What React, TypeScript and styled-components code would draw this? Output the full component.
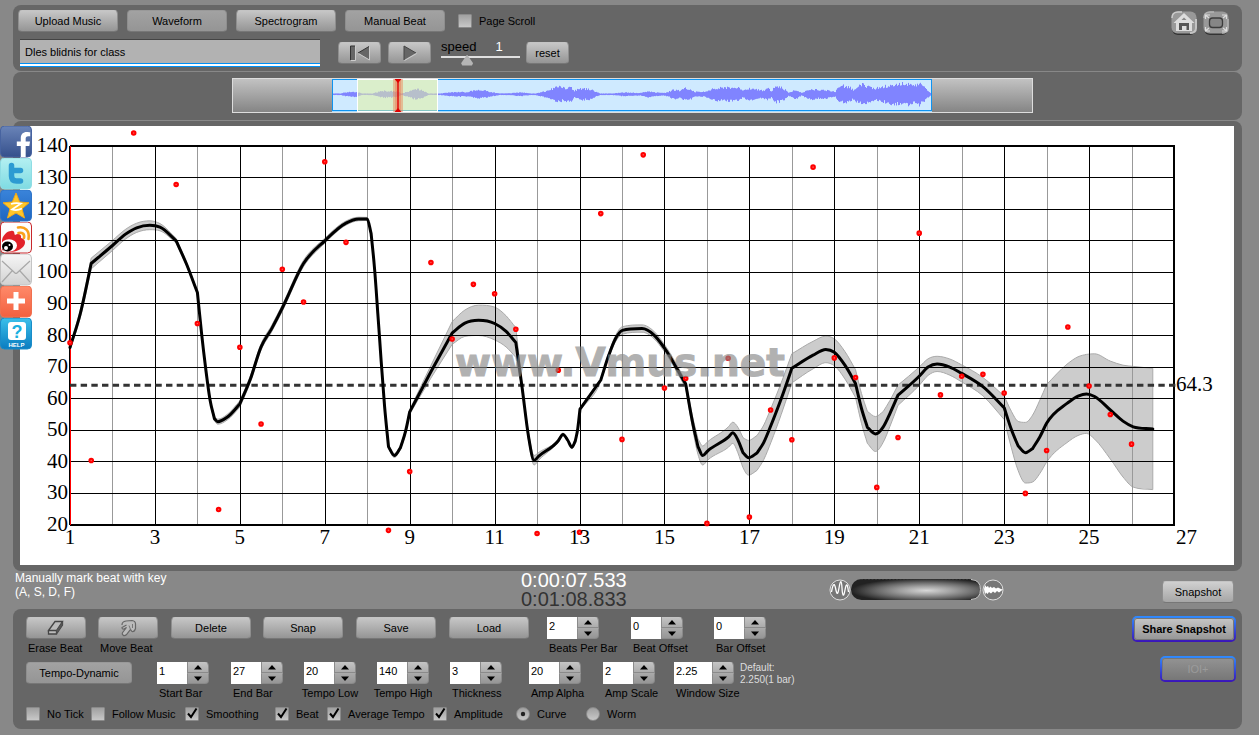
import React from "react";
import styled, { createGlobalStyle, css } from "styled-components";
import { FaFacebookF } from "react-icons/fa";

const GlobalStyle = createGlobalStyle`
  *, *::before, *::after { box-sizing: border-box; }
  body {
    margin: 0;
    background: #888;
    font-family: "Liberation Sans", Arial, sans-serif;
    font-size: 11px;
    color: #000;
  }
  button, input { font: inherit; color: inherit; margin: 0; }
`;

/* ---------- layout ---------- */

const Page = styled.main`
  position: relative;
  display: flex;
  flex-direction: column;
  padding: 5px 17px 7px 13px;
`;

const Panel = styled.section`
  background: #666;
  border-radius: 8px;
`;

const TopPanel = styled(Panel)`
  display: flex;
  justify-content: space-between;
  padding: 5px 12px 4px 5px;
  margin-bottom: 1px;
`;

const TopLeft = styled.div`
  display: flex;
  flex-direction: column;
  gap: 7px;
`;

const ButtonRow = styled.div`
  display: flex;
  align-items: center;
  gap: 9px;
  height: 22px;
`;

const TransportRow = styled.div`
  display: flex;
  align-items: center;
  gap: 7px;
  height: 28px;
  padding-left: 2px;
`;

const CornerTools = styled.div`
  display: flex;
  gap: 4px;
`;

const OverviewPanel = styled(Panel)`
  display: flex;
  justify-content: center;
  padding: 6px 0 7px 10px;
  margin-bottom: 1px;
`;

const ChartPanel = styled(Panel)`
  padding: 5px 8px 6px 7px;
`;

const StatusBar = styled.div`
  display: grid;
  grid-template-columns: 506px 308px 1fr auto;
  align-items: start;
  height: 38px;
  padding: 0 8px 0 2px;
`;

const ControlPanel = styled(Panel)`
  display: flex;
  justify-content: space-between;
  padding: 7px 6px 8px 13px;
`;

const ControlGroups = styled.div`
  display: flex;
  flex-direction: column;
  gap: 5px;
  padding-top: 1px;
`;

const ControlGrid = styled.div<{ $columns: string }>`
  display: grid;
  grid-template-columns: ${(p) => p.$columns};
  align-items: start;
`;

const ShareColumn = styled.div`
  display: flex;
  flex-direction: column;
  align-items: flex-end;
  gap: 14px;
`;

/* ---------- controls ---------- */

const Button = styled.button<{ $width: number; $pressed?: boolean }>`
  display: flex;
  align-items: center;
  justify-content: center;
  width: ${(p) => p.$width}px;
  height: 22px;
  padding: 0;
  border: 1px solid #8e8e8e;
  border-top-color: ${(p) => (p.$pressed ? "#999" : "#c4c4c4")};
  border-bottom-color: #777;
  border-radius: 4px;
  background: ${(p) =>
    p.$pressed
      ? "linear-gradient(#a2a2a2, #959595)"
      : "linear-gradient(#c6c6c6, #959595)"};
  white-space: nowrap;
`;

const RingButton = styled(Button)<{ $dim?: boolean }>`
  height: 26px;
  font-weight: bold;
  border: 2px solid transparent;
  border-radius: 5px;
  background:
    ${(p) => (p.$dim ? "linear-gradient(#939393, #777)" : "linear-gradient(#c6c6c6, #959595)")} padding-box,
    linear-gradient(#2f8cff, #3a14b8) border-box;
  box-shadow: inset 0 0 0 1px #777;
  ${(p) =>
    p.$dim &&
    css`
      color: #9b9b9b;
      font-weight: normal;
    `}
`;

const SnapshotButton = styled(Button)`
  margin-top: 10px;
  background: linear-gradient(#d0d0d0, #a6a6a6);
`;

const TitleInput = styled.input`
  width: 300px;
  height: 28px;
  margin-right: 11px;
  padding: 0 5px 2px;
  border: 0;
  border-top: 1px solid #444;
  border-bottom: 1px solid #0090f5;
  background: #b2b2b2;
  box-shadow: inset 0 -2px #fff, inset 0 -3px #0090f5;
  outline: none;
`;

const SpeedBox = styled.div`
  display: grid;
  grid-template-columns: 1fr 1fr;
  width: 79px;
  margin: 0 -1px 0 3px;
  font-size: 13px;
  line-height: 14px;
`;

const SpeedValue = styled.output`
  color: #fff;
  padding-left: 15px;
`;

const SpeedRange = styled.input`
  grid-column: 1 / -1;
  appearance: none;
  width: 79px;
  height: 12px;
  background: linear-gradient(#e0e0e0, #e0e0e0) 0 2px / 100% 2px no-repeat;
  &::-webkit-slider-thumb {
    appearance: none;
    width: 12px;
    height: 11px;
    background: #b5b5b5;
    clip-path: polygon(50% 0, 100% 80%, 90% 100%, 10% 100%, 0 80%);
  }
`;

const TickLabel = styled.label`
  position: relative;
  display: flex;
  align-items: center;
  gap: 7px;
  height: 14px;
  white-space: nowrap;
  svg {
    position: absolute;
    left: 1px;
    top: 0;
    display: none;
    pointer-events: none;
  }
  input:checked + svg {
    display: block;
  }
`;

const Tick = styled.input`
  appearance: none;
  width: 14px;
  height: 14px;
  border: 1px solid #8a8a8a;
  border-radius: ${(p) => (p.type === "radio" ? "50%" : "1px")};
  background: linear-gradient(#a0a0a0, #c8c8c8);
`;

const FirstRowTick = styled.div`
  padding-left: 4px;
`;

const Field = styled.div`
  display: flex;
  flex-direction: column;
  width: max-content;
`;

const FieldLabel = styled.label<{ $center?: boolean }>`
  line-height: 18px;
  white-space: nowrap;
  ${(p) =>
    p.$center
      ? css`
          align-self: center;
          margin: 0 -8px;
        `
      : css`
          padding-left: 2px;
          margin-right: -20px;
        `}
`;

const ButtonCaption = styled.div`
  padding-left: 2px;
  line-height: 18px;
`;

const StepperBox = styled.div`
  display: flex;
  height: 22px;
`;

const StepperInput = styled.input<{ $wide?: boolean }>`
  width: ${(p) => (p.$wide ? 38 : 30)}px;
  height: 22px;
  padding: 0 0 4px 2px;
  border: 0;
  background: #fff;
`;

const StepperArrows = styled.div`
  display: flex;
  flex-direction: column;
  width: 22px;
`;

const ArrowButton = styled.button<{ $down?: boolean }>`
  display: flex;
  align-items: center;
  justify-content: center;
  height: 11px;
  padding: 0;
  border: 1px solid #8a8a8a;
  border-top-color: ${(p) => (p.$down ? "#aaa" : "#c4c4c4")};
  border-radius: ${(p) => (p.$down ? "0 0 4px 0" : "0 4px 0 0")};
  background: ${(p) =>
    p.$down ? "linear-gradient(#a8a8a8, #969696)" : "linear-gradient(#c2c2c2, #acacac)"};
`;

const DefaultNote = styled.p`
  margin: 0;
  color: #ddd;
  font-size: 10px;
  line-height: 12px;
  white-space: nowrap;
`;

const IconButton = styled.button`
  width: 28px;
  height: 26px;
  padding: 0;
  border: 0;
  background: none;
  svg {
    display: block;
  }
`;

const KeyHint = styled.p`
  margin: 0;
  color: #fff;
  font-size: 12px;
  line-height: 14px;
`;

const Clock = styled.div`
  color: #333;
  font-size: 20px;
  line-height: 19px;
`;

const ClockNow = styled.div`
  color: #fff;
`;

const JogDial = styled.div`
  padding-top: 7px;
  svg {
    display: block;
  }
`;

const Overview = styled.div`
  padding: 0 100px 0 99px;
  border: 1px solid #ddd;
  background: linear-gradient(#c2c2c2, #858585);
  svg {
    display: block;
  }
`;

const ChartSvg = styled.svg`
  display: block;
  width: 100%;
  height: auto;
  background: #fff;
`;

const SocialBar = styled.nav`
  position: absolute;
  left: 0;
  top: 126px;
  display: flex;
  flex-direction: column;
  a {
    display: block;
    width: 32px;
    height: 32px;
  }
  svg {
    display: block;
  }
`;

/* ---------- small parts ---------- */

function Check({
  label,
  type = "checkbox",
  checked,
}: {
  label: string;
  type?: "checkbox" | "radio";
  checked?: boolean;
}) {
  return (
    <TickLabel>
      <Tick type={type} name={type === "radio" ? "view" : undefined} defaultChecked={checked} />
      {type === "checkbox" ? (
        <svg width="12" height="13" viewBox="0 0 12 13">
          <path d="M2 6.5 L5 10 L10.5 1.5" fill="none" stroke="#000" strokeWidth="2" />
        </svg>
      ) : (
        <svg width="12" height="14" viewBox="0 0 12 14">
          <circle cx="6" cy="7" r="2.2" fill="#222" />
        </svg>
      )}
      {label}
    </TickLabel>
  );
}

function Stepper({
  label,
  value,
  wide,
  center,
}: {
  label: string;
  value: string;
  wide?: boolean;
  center?: boolean;
}) {
  const id = label.toLowerCase().replace(/ /g, "-");
  return (
    <Field>
      <StepperBox>
        <StepperInput id={id} defaultValue={value} $wide={wide} />
        <StepperArrows>
          <ArrowButton aria-label={`Increase ${label}`}>
            <svg width="8" height="5" viewBox="0 0 8 5">
              <path d="M4 0 L8 4.5 H0 Z" />
            </svg>
          </ArrowButton>
          <ArrowButton $down aria-label={`Decrease ${label}`}>
            <svg width="8" height="5" viewBox="0 0 8 5">
              <path d="M0 .5 H8 L4 5 Z" />
            </svg>
          </ArrowButton>
        </StepperArrows>
      </StepperBox>
      <FieldLabel htmlFor={id} $center={center}>
        {label}
      </FieldLabel>
    </Field>
  );
}

/* ---------- overview wave form ---------- */

// [x, half height] of the loudness envelope over the whole recording
const envelope: [number, number][] = [
  [0, 0.5], [8, 0.5], [13, 1.5], [18, 2], [24, 2], [30, 0.5], [40, 0.5], [46, 2], [52, 3],
  [60, 2.5], [66, 2], [69, 0.5], [74, 2], [80, 3.5], [85, 4.5], [90, 3], [96, 0.5], [108, 0.5],
  [118, 1.5], [128, 2], [133, 1.5], [143, 3.5], [153, 3], [160, 1.5], [168, 0.5],
  [178, 0.7], [188, 1.5], [198, 0.5], [203, 0.5], [208, 1.5], [216, 3], [221, 5.5], [226, 7],
  [231, 5.5], [238, 6.5], [242, 3], [248, 5], [258, 4.5], [263, 2], [268, 0.5], [280, 0.5],
  [290, 1.5], [308, 1], [316, 2.5], [323, 1.5], [333, 1], [340, 3.5], [344, 4], [348, 3],
  [353, 5.5], [358, 4.5], [362, 2], [371, 2], [378, 4], [383, 5.5], [390, 5.5], [398, 6],
  [406, 5.5], [410, 3], [416, 5], [423, 4.5], [430, 3], [436, 5], [439, 2.5], [443, 7],
  [448, 6.5], [453, 4], [456, 1], [461, 3.5], [465, 3.5], [469, 1], [474, 3], [479, 4.5],
  [488, 3.5], [494, 3.5], [503, 2], [506, 6], [511, 7.5], [516, 7], [521, 4], [525, 7],
  [530, 8.5], [536, 7], [542, 5], [550, 6.5], [556, 8], [562, 9.5], [568, 9], [573, 10.5],
  [578, 9], [582, 7], [586, 10], [592, 6], [598, 1], [600, 0.5],
];

function sample(table: [number, number][], x: number) {
  for (let i = 1; i < table.length; i++) {
    const [x0, v0] = table[i - 1];
    const [x1, v1] = table[i];
    if (x <= x1) return v0 + ((v1 - v0) * (x - x0)) / (x1 - x0);
  }
  return table[table.length - 1][1];
}

const jitter = (seed: number) => {
  const v = Math.sin(seed) * 43758.5453;
  return v - Math.floor(v);
};

const wavePath = Array.from({ length: 598 }, (_, x) => {
  const base = sample(envelope, x + 1);
  const up = base * (0.8 + 0.5 * jitter(x * 12.9898 + 1));
  const down = base * (0.8 + 0.5 * jitter(x * 78.233 + 2));
  return `M${x + 1.5} ${(15 - up).toFixed(1)}V${(15.5 + down).toFixed(1)}`;
}).join("");

function WaveOverview() {
  return (
    <Overview>
      <svg width="600" height="33" viewBox="0 0 600 33" aria-label="Recording overview">
        <rect x=".5" y=".5" width="599" height="31" fill="#cfeaff" stroke="#0f93f0" />
        <path d="M0 32.5H600" stroke="#a8dcff" />
        <path d={wavePath} stroke="#8084ff" />
        <rect x="25.5" y="0.5" width="80" height="32" fill="#e4f0a0" fillOpacity=".55" stroke="#fff" />
        <rect x="61" y="0" width="10" height="33" fill="#f07040" fillOpacity=".4" />
        <rect x="63" y="0" width="6" height="33" fill="#f06040" fillOpacity=".3" />
        <path d="M66 0V33" stroke="#e00000" strokeWidth="1.4" />
        <path d="M62.5 0H69.5L66 4ZM62.5 33H69.5L66 29Z" fill="#e00000" />
      </svg>
    </Overview>
  );
}

/* ---------- tempo chart ---------- */

const plot = { left: 50, right: 1154, top: 20, bottom: 399 };
const xOf = (bar: number) => plot.left + ((bar - 1) * (plot.right - plot.left)) / 26;
const yOf = (bpm: number) => plot.bottom - ((bpm - 20) * (plot.bottom - plot.top)) / 120;

// [bar, beats per minute]
const tempo: [number, number][] = [
  [1, 76.2], [1.24, 86.8], [1.5, 102.8], [2, 108.5], [2.3, 112], [2.57, 114.1], [2.88, 114.9],
  [3.12, 114.3], [3.5, 110], [3.75, 102.4], [4, 93.6], [4.1, 80.6], [4.2, 69], [4.3, 59.5],
  [4.4, 53.7], [4.48, 52.7], [4.7, 54.1], [5, 58.3], [5.25, 66.3], [5.5, 76.4], [5.75, 82.2],
  [6, 88.7], [6.5, 102.8], [7, 110], [7.5, 115.6], [7.8, 116.9], [8, 116.9], [8.09, 112.3],
  [8.17, 101.7], [8.25, 87], [8.33, 71.7], [8.41, 57.5], [8.5, 44.8], [8.64, 42], [8.78, 44.4],
  [8.9, 49.5], [9, 55.8], [9.5, 68.5], [10, 80.8], [10.3, 83.9], [10.62, 84.8], [11, 83.8],
  [11.27, 81.3], [11.5, 77.8], [11.65, 63.3], [11.8, 47.9], [11.93, 40.5], [12.04, 41.8],
  [12.5, 46.7], [12.61, 48.7], [12.72, 46.9], [12.82, 44.6], [12.9, 46.6], [12.96, 50.6],
  [13.01, 56.7], [13.5, 65.9], [13.69, 73.8], [13.84, 78.8], [14.01, 81.6], [14.47, 82.2],
  [14.75, 80.2], [15, 76], [15.5, 64.6], [15.66, 52.6], [15.79, 44.8], [15.9, 42],
  [16.02, 43.5], [16.51, 47.9], [16.61, 49.2], [16.73, 46.9], [16.85, 42.9], [16.98, 41.3],
  [17.18, 42.8], [17.34, 46.2], [17.51, 51.6], [17.75, 60], [18, 69.6], [18.5, 73.8],
  [18.8, 75.6], [19, 74.7], [19.25, 70.6], [19.5, 64.8], [19.64, 56.9], [19.78, 50.9],
  [19.97, 48.8], [20.15, 51], [20.31, 55.3], [20.5, 61.1], [21, 67.1], [21.21, 70],
  [21.42, 71], [21.72, 70], [22, 68], [22.5, 63.8], [23, 57.1], [23.17, 50.2], [23.33, 45],
  [23.5, 42.9], [23.67, 44.2], [23.84, 47.9], [24, 52.2], [24.48, 58.5], [24.74, 60.8],
  [24.94, 61.5], [25.13, 60.7], [25.5, 56.4], [25.8, 52.9], [26.04, 51.1], [26.5, 50.4],
];

// [bar, half width of the amplitude band]
const spread: [number, number][] = [
  [1, 0.8], [1.5, 1.7], [2.9, 1.4], [3.5, 0.7], [4, 0.4], [4.5, 0.8], [5, 1], [6.5, 1],
  [7, 0.8], [8, 0.5], [9, 0.7], [9.5, 2], [10, 3.6], [10.62, 4.8], [11, 5.2], [11.5, 4.7],
  [11.65, 1], [11.93, 1.5], [12.2, 0.8], [12.5, 0.4], [13.5, 0.4], [14, 1.2], [15.5, 1.1],
  [15.9, 3], [16, 2.9], [16.6, 3.3], [17, 5.6], [17.5, 5.4], [18, 4.6], [18.8, 4.2],
  [19.5, 4.4], [20, 5.6], [20.5, 3.2], [21, 2.9], [21.4, 2.4], [22, 2.7], [22.5, 2.9],
  [23, 3.7], [23.17, 5.8], [23.33, 7.8], [23.5, 9.6], [23.67, 10.6], [23.84, 11.6],
  [24, 12.3], [24.94, 12.5], [25.5, 15.5], [25.8, 17.7], [26, 19.1], [26.5, 19.2],
];

const beats: [number, number][] = [
  [1, 77.7], [1.5, 40.4], [2.5, 144.1], [3.5, 127.8], [4, 83.8], [4.5, 24.9], [5, 76.3],
  [5.5, 52], [6, 101], [6.5, 90.6], [7, 135], [7.5, 109.5], [8.5, 18.3], [9, 36.9],
  [9.5, 103.1], [10, 78.9], [10.5, 96.2], [11, 93.2], [11.5, 82], [12, 17.3], [12.5, 69],
  [13, 17.7], [13.5, 118.6], [14, 47.1], [14.5, 137.2], [15, 63.4], [15.5, 66.4], [16, 20.5],
  [16.5, 72.8], [17, 22.5], [17.5, 56.4], [18, 47], [18.5, 133.3], [19, 72.9], [19.5, 66.7],
  [20, 31.9], [20.5, 47.7], [21, 112.4], [21.5, 61.2], [22, 67.1], [22.5, 67.7], [23, 61.8],
  [23.5, 30], [24, 43.6], [24.5, 82.7], [25, 64], [25.5, 55], [26, 45.6],
];

// Cubic path through the points. Peaks stay flat, and a sudden change of
// slope is kept as a corner.
function smooth(points: [number, number][], first: "M" | "L" = "M") {
  const n = points.length;
  const slope = points.slice(1).map(([x, y], i) => (y - points[i][1]) / (x - points[i][0]));
  const tangents = points.map((_, i): [number, number] => {
    if (i === 0) return [slope[0], slope[0]];
    if (i === n - 1) return [slope[n - 2], slope[n - 2]];
    const a = slope[i - 1];
    const b = slope[i];
    if (a * b <= 0) return [0, 0];
    const low = Math.min(Math.abs(a), Math.abs(b));
    const high = Math.max(Math.abs(a), Math.abs(b));
    if (high > 1.5 && high / low > 2.2) return [a, b];
    const before = Math.abs(points[i][0] - points[i - 1][0]);
    const after = Math.abs(points[i + 1][0] - points[i][0]);
    const mean = (a * after + b * before) / (before + after);
    const t = Math.sign(mean) * Math.min(Math.abs(mean), 3 * low);
    return [t, t];
  });
  let d = `${first}${points[0][0].toFixed(1)} ${points[0][1].toFixed(1)}`;
  for (let i = 1; i < n; i++) {
    const [x0, y0] = points[i - 1];
    const [x1, y1] = points[i];
    const h = (x1 - x0) / 3;
    d += `C${[x0 + h, y0 + h * tangents[i - 1][1], x1 - h, y1 - h * tangents[i][0], x1, y1]
      .map((v) => v.toFixed(1))
      .join(" ")}`;
  }
  return d;
}

const line = tempo.map(([b, v]) => [xOf(b), yOf(v)] as [number, number]);
const upper = tempo.map(([b, v]) => [xOf(b), yOf(v + sample(spread, b))] as [number, number]);
const lower = tempo.map(([b, v]) => [xOf(b), yOf(v - sample(spread, b))] as [number, number]);
const bandPath = smooth(upper) + smooth(lower.reverse(), "L") + "Z";
const average = 64.3;

function TempoChart() {
  const bars = Array.from({ length: 25 }, (_, i) => i + 2);
  const levels = Array.from({ length: 13 }, (_, i) => 20 + i * 10);
  return (
    <ChartSvg viewBox="0 0 1214 439" role="img" aria-label="Tempo by bar">
      <path d={bandPath} fill="#ccc" stroke="#aaa" />
      <g shapeRendering="crispEdges">
        {bars.map((b) => (
          <path
            key={b}
            d={`M${Math.round(xOf(b)) + 0.5} ${plot.top}V${plot.bottom}`}
            stroke={b % 2 ? "#000" : "#999"}
          />
        ))}
        {levels.slice(1, -1).map((v) => (
          <path key={v} d={`M${plot.left} ${Math.floor(yOf(v)) + 0.5}H${plot.right}`} stroke="#000" />
        ))}
        <path
          d={`M${plot.left} ${plot.top}H${plot.right}V${plot.bottom}H${plot.left}`}
          fill="none"
          stroke="#000"
          strokeWidth="2"
        />
        <path d={`M${plot.left - 0.5} ${plot.top}V${plot.bottom}`} stroke="#000" />
        <path d={`M${plot.left + 0.5} ${plot.top}V${plot.bottom}`} stroke="#f00" />
      </g>
      <path
        d={`M${plot.left} ${yOf(average) + 0.2}H${plot.right + 2}`}
        stroke="#333"
        strokeWidth="3"
        strokeDasharray="6.4 4.27"
      />
      <path
        d={smooth(line)}
        fill="none"
        stroke="#000"
        strokeWidth="3"
        strokeLinecap="round"
        strokeLinejoin="round"
      />
      {beats.map(([b, v]) => (
        <circle key={b} cx={xOf(b)} cy={yOf(v)} r="1.8" fill="#f55" stroke="#f00" strokeWidth="2" />
      ))}
      <text
        x="435"
        y="250"
        fill="#888"
        stroke="#888"
        opacity=".65"
        fontFamily="'DejaVu Sans', sans-serif"
        fontWeight="bold"
        fontSize="39"
      >
        www.Vmus.net
      </text>
      <g fontFamily="'Liberation Serif', 'Times New Roman', serif" fontSize="21">
        {levels.map((v) => (
          <text key={v} x="48" y={yOf(v) + 6} textAnchor="end">
            {v}
          </text>
        ))}
        {bars
          .filter((b) => b % 2)
          .concat(1)
          .map((b) => (
            <text key={b} x={xOf(b)} y="418" textAnchor="middle">
              {b}
            </text>
          ))}
        <text x="1156" y="418">27</text>
        <text x="1156" y="265">{average}</text>
      </g>
    </ChartSvg>
  );
}

/* ---------- drawings ---------- */

function HomeIcon() {
  return (
    <svg width="28" height="26" viewBox="0 0 28 26">
      <rect x="2" y="3" width="24" height="22" rx="6" fill="#333" />
      <rect x="1.5" y="1.5" width="25" height="22" rx="6" fill="#999" />
      <path d="M2 8Q2 2 8 2H12" fill="none" stroke="#ccc" strokeWidth="1.5" />
      <path d="M26 9V18Q26 23 20 23" fill="none" stroke="#c4c4c4" strokeWidth="2" />
      <path d="M3.5 13L14 3L24.5 13H22V21H6V13Z" fill="#ddd" />
      <path d="M9 13H19V20H16.5V16H12V20H9Z" fill="#555" />
      <path d="M11.5 10H16.5L14 7.5Z" fill="#888" />
    </svg>
  );
}

function FullscreenIcon() {
  return (
    <svg width="28" height="26" viewBox="0 0 28 26">
      <rect x="2" y="3" width="24" height="22" rx="6" fill="#333" />
      <rect x="1.5" y="1.5" width="25" height="22" rx="6" fill="#999" />
      <path d="M2 8Q2 2 8 2H12M26 9V18Q26 23 20 23" fill="none" stroke="#b4b4b4" strokeWidth="1.5" />
      <rect x="7.5" y="8" width="13" height="9.5" rx="3" fill="#868686" stroke="#3c3c3c" strokeWidth="1.3" />
      <path
        d="M3.5 9V5H8M4 5.500L7 8M20 5H24.5V9M24 5.5L21 8M3.5 17V21H8M4 20.5L7 18M20 21H24.5V17M24 20.5L21 18"
        fill="none"
        stroke="#ddd"
        strokeWidth="1.2"
      />
    </svg>
  );
}

function JogWheel() {
  return (
    <svg width="176" height="24" viewBox="0 0 176 24">
      <defs>
        <radialGradient id="jog" cx=".58" cy=".55" r=".58">
          <stop offset="0" stopColor="#d8d8d8" />
          <stop offset=".35" stopColor="#a0a0a0" />
          <stop offset=".65" stopColor="#6a6a6a" />
          <stop offset="1" stopColor="#222" />
        </radialGradient>
      </defs>
      <circle cx="11" cy="12" r="10" fill="#777" stroke="#ddd" />
      <path
        d="M2.5 14C4 5 5.500 5 6.500 10S8.500 19 10 10S12.500 2 13 10S14.500 20 16 12S18.500 6 19.500 14"
        fill="none"
        stroke="#fff"
        strokeWidth="1.3"
      />
      <rect x="22" y="1" width="130" height="21" rx="10.5" fill="url(#jog)" />
      <path d="M32 1.500H142" stroke="#333" strokeDasharray="2 1.5" />
      <path d="M142 1.500Q151.500 2 151.500 11.500Q151.500 21 142 21.500" fill="none" stroke="#ccc" />
      <circle cx="164" cy="12" r="10" fill="#777" stroke="#ddd" />
      <path
        d="M155 11L156 7L157.500 9L159 8L160 10L161.500 8.500L163 10L165 9L167 10.500L169 9.500L172 11L174 11.500L172 13L170 14.500L168 13L166 15L164 13.500L162 15.500L160 14L158.500 16L157 14.500L156 17Z"
        fill="#fff"
      />
    </svg>
  );
}

const Tile = ({ id, top, bottom, edge, children }: {
  id: string;
  top: string;
  bottom: string;
  edge: string;
  children: React.ReactNode;
}) => (
  <svg width="32" height="32" viewBox="0 0 32 32">
    <defs>
      <linearGradient id={id} x2="0" y2="1">
        <stop offset="0" stopColor={top} />
        <stop offset="1" stopColor={bottom} />
      </linearGradient>
    </defs>
    <rect x=".5" y="0" width="31" height="31" rx="4" fill={`url(#${id})`} stroke={edge} />
    {children}
  </svg>
);

function SocialLinks() {
  return (
    <SocialBar aria-label="Share">
      <a href="#facebook" aria-label="Facebook">
        <Tile id="fb" top="#6a84b8" bottom="#35508c" edge="#4763a0">
          <FaFacebookF x="11" y="6" width={17} height={25} size={25} color="#fff" />
        </Tile>
      </a>
      <a href="#twitter" aria-label="Twitter">
        <Tile id="tw" top="#b4f0f2" bottom="#7fdbe2" edge="#8fdde4">
          <path
            d="M11.5 7.5V18Q11.5 23 16.5 23H20.5M11.5 12.5H20.5"
            fill="none"
            stroke="#2d9bd2"
            strokeWidth="5.500"
            strokeLinecap="round"
          />
        </Tile>
      </a>
      <a href="#qzone" aria-label="Qzone">
        <Tile id="qz" top="#3a84da" bottom="#1f66c0" edge="#2f74c8">
          <path
            d="M16 3L19.700 12L29 12.800L22 18.800L24.500 28L16 23L7.500 28L10 18.800L3 12.800L12.300 12Z"
            fill="#ffc62a"
            stroke="#f0a818"
          />
          <path
            d="M11 14Q15 12.500 21 13.500L12 19.500Q17 21 22 18.500"
            fill="none"
            stroke="#fff"
            strokeWidth="1.700"
          />
        </Tile>
      </a>
      <a href="#weibo" aria-label="Weibo">
        <Tile id="wb" top="#fff" bottom="#f6f6f6" edge="#c8282c">
          <path
            d="M2 19C2 14 7 9 11 9C15 8 14 12 15 13C18 11 22 12 21 16C26 17 26 22 23 25C19 29 14 30 9 30L2 28Z"
            fill="#e2222a"
          />
          <ellipse cx="9" cy="23.500" rx="8" ry="6.200" fill="#fff" />
          <ellipse cx="7.500" cy="24.500" rx="5.500" ry="5" fill="#000" />
          <circle cx="6" cy="26" r="2" fill="#fff" />
          <circle cx="9.500" cy="23" r="1" fill="#fff" />
          <path
            d="M18 5.500C25 4 30 9 28.500 17M18.500 11C22 10 25 12 24 16"
            fill="none"
            stroke="#f9a11b"
            strokeWidth="2.600"
            strokeLinecap="round"
          />
        </Tile>
      </a>
      <a href="#mail" aria-label="E-mail">
        <Tile id="ml" top="#f6f6f6" bottom="#d2d2d2" edge="#c4c4c4">
          <path
            d="M2 7L15 19Q16 20 17 19L30 7M2 28L12 17M30 28L20 17"
            fill="none"
            stroke="#a8a8a8"
            strokeWidth="1.200"
          />
        </Tile>
      </a>
      <a href="#more" aria-label="More">
        <Tile id="pl" top="#ff8a6a" bottom="#f2603f" edge="#f0704f">
          <path d="M16 6V24M7 15H25" stroke="#fff" strokeWidth="5" />
        </Tile>
      </a>
      <a href="#help" aria-label="Help">
        <Tile id="hp" top="#3cc0ea" bottom="#0a7cc0" edge="#1a8cc8">
          <rect x="8" y="4" width="18" height="18" rx="3" fill="#fff" />
          <text x="17" y="19.500" textAnchor="middle" fontSize="18" fontWeight="bold" fill="#1ab0e0">?</text>
          <text x="16.500" y="29" textAnchor="middle" fontSize="6" fontWeight="bold" fill="#fff">HELP</text>
        </Tile>
      </a>
    </SocialBar>
  );
}

/* ---------- page ---------- */

export default function App() {
  return (
    <>
      <GlobalStyle />
      <Page>
        <TopPanel>
          <TopLeft>
            <ButtonRow>
              <Button $width={100}>Upload Music</Button>
              <Button $width={100} $pressed>Waveform</Button>
              <Button $width={100}>Spectrogram</Button>
              <Button $width={100} $pressed>Manual Beat</Button>
              <FirstRowTick>
                <Check label="Page Scroll" />
              </FirstRowTick>
            </ButtonRow>
            <TransportRow>
              <TitleInput aria-label="Title" defaultValue="Dles blidnis for class" />
              <Button $width={43} aria-label="Back to start">
                <svg width="22" height="16" viewBox="0 0 22 16">
                  <path d="M1.5 1H6V15H1.5ZM20 1.5V14.5L9 8Z" fill="#666" />
                  <path d="M1.5 15V1H6M9 8L20 1.5" fill="none" stroke="#333" />
                  <path d="M20.5 2V15L9.5 8.5M6.5 1V15.5H2" fill="none" stroke="#ccc" />
                </svg>
              </Button>
              <Button $width={43} aria-label="Play">
                <svg width="16" height="16" viewBox="0 0 16 16">
                  <path d="M2 1L14 8L2 15Z" fill="#666" />
                  <path d="M2 15V1L14 8" fill="none" stroke="#444" />
                  <path d="M2.5 15.5L14.5 8.5" stroke="#ccc" />
                </svg>
              </Button>
              <SpeedBox>
                <label htmlFor="speed">speed</label>
                <SpeedValue htmlFor="speed">1</SpeedValue>
                <SpeedRange id="speed" type="range" min="0" max="3" step="0.1" defaultValue="0.9" />
              </SpeedBox>
              <Button $width={43}>reset</Button>
            </TransportRow>
          </TopLeft>
          <CornerTools>
            <IconButton aria-label="Home"><HomeIcon /></IconButton>
            <IconButton aria-label="Full screen"><FullscreenIcon /></IconButton>
          </CornerTools>
        </TopPanel>

        <OverviewPanel>
          <WaveOverview />
        </OverviewPanel>

        <ChartPanel>
          <TempoChart />
        </ChartPanel>

        <StatusBar>
          <KeyHint>
            Manually mark beat with key
            <br />
            (A, S, D, F)
          </KeyHint>
          <Clock>
            <ClockNow>0:00:07.533</ClockNow>
            <div>0:01:08.833</div>
          </Clock>
          <JogDial>
            <JogWheel />
          </JogDial>
          <SnapshotButton $width={72}>Snapshot</SnapshotButton>
        </StatusBar>

        <ControlPanel>
          <ControlGroups>
            <ControlGrid $columns="72px 73px 92px 93px 93px 98px 84px 83px 60px">
              <Field>
                <Button $width={60} aria-labelledby="erase">
                  <svg width="18" height="16" viewBox="0 0 18 16">
                    <path
                      d="M1.5 10.5L8 1.5H15.5L9.5 10.5ZM1.5 10.5V14H9.5V10.5M9.5 14L15.5 5V1.5"
                      fill="#bbb"
                      stroke="#444"
                      strokeWidth="1.3"
                    />
                    <path d="M9.5 10.5L15.5 1.5V5L9.5 14Z" fill="#555" />
                  </svg>
                </Button>
                <ButtonCaption id="erase">Erase Beat</ButtonCaption>
              </Field>
              <Field>
                <Button $width={60} aria-labelledby="move">
                  <svg width="18" height="18" viewBox="0 0 18 18">
                    <path
                      d="M3 6Q3 2.500 7 2L13 1.500Q16.500 2 16.500 5V9.500Q15.500 13 13 12.500L11.500 10.500L7.500 15.500Q5.500 17.500 4 16Q2.500 15 4 13L7.500 8.500L5 10Q3 10.500 3 8.500L7.500 6"
                      fill="#bbb"
                      stroke="#666"
                      strokeWidth="1.2"
                    />
                    <path d="M10 6.500L11.500 10.500M13.500 5V9" fill="none" stroke="#777" />
                  </svg>
                </Button>
                <ButtonCaption id="move">Move Beat</ButtonCaption>
              </Field>
              <Button $width={80}>Delete</Button>
              <Button $width={80}>Snap</Button>
              <Button $width={80}>Save</Button>
              <Button $width={80}>Load</Button>
              <Stepper label="Beats Per Bar" value="2" />
              <Stepper label="Beat Offset" value="0" />
              <Stepper label="Bar Offset" value="0" />
            </ControlGrid>
            <ControlGrid $columns="131px 74px 73px 73px 73px 79px 74px 71px 66px 60px">
              <Button $width={106} $pressed>Tempo-Dynamic</Button>
              <Stepper label="Start Bar" value="1" />
              <Stepper label="End Bar" value="27" />
              <Stepper label="Tempo Low" value="20" center />
              <Stepper label="Tempo High" value="140" center />
              <Stepper label="Thickness" value="3" />
              <Stepper label="Amp Alpha" value="20" />
              <Stepper label="Amp Scale" value="2" />
              <Stepper label="Window Size" value="2.25" wide />
              <DefaultNote>
                Default:
                <br />
                2.250(1 bar)
              </DefaultNote>
            </ControlGrid>
            <ControlGrid $columns="65px 94px 90px 52px 106px 83px 70px 60px">
              <Check label="No Tick" />
              <Check label="Follow Music" />
              <Check label="Smoothing" checked />
              <Check label="Beat" checked />
              <Check label="Average Tempo" checked />
              <Check label="Amplitude" checked />
              <Check type="radio" label="Curve" checked />
              <Check type="radio" label="Worm" />
            </ControlGrid>
          </ControlGroups>
          <ShareColumn>
            <RingButton $width={104}>Share Snapshot</RingButton>
            <RingButton $width={76} $dim disabled>IOI+</RingButton>
          </ShareColumn>
        </ControlPanel>
        <SocialLinks />
      </Page>
    </>
  );
}
